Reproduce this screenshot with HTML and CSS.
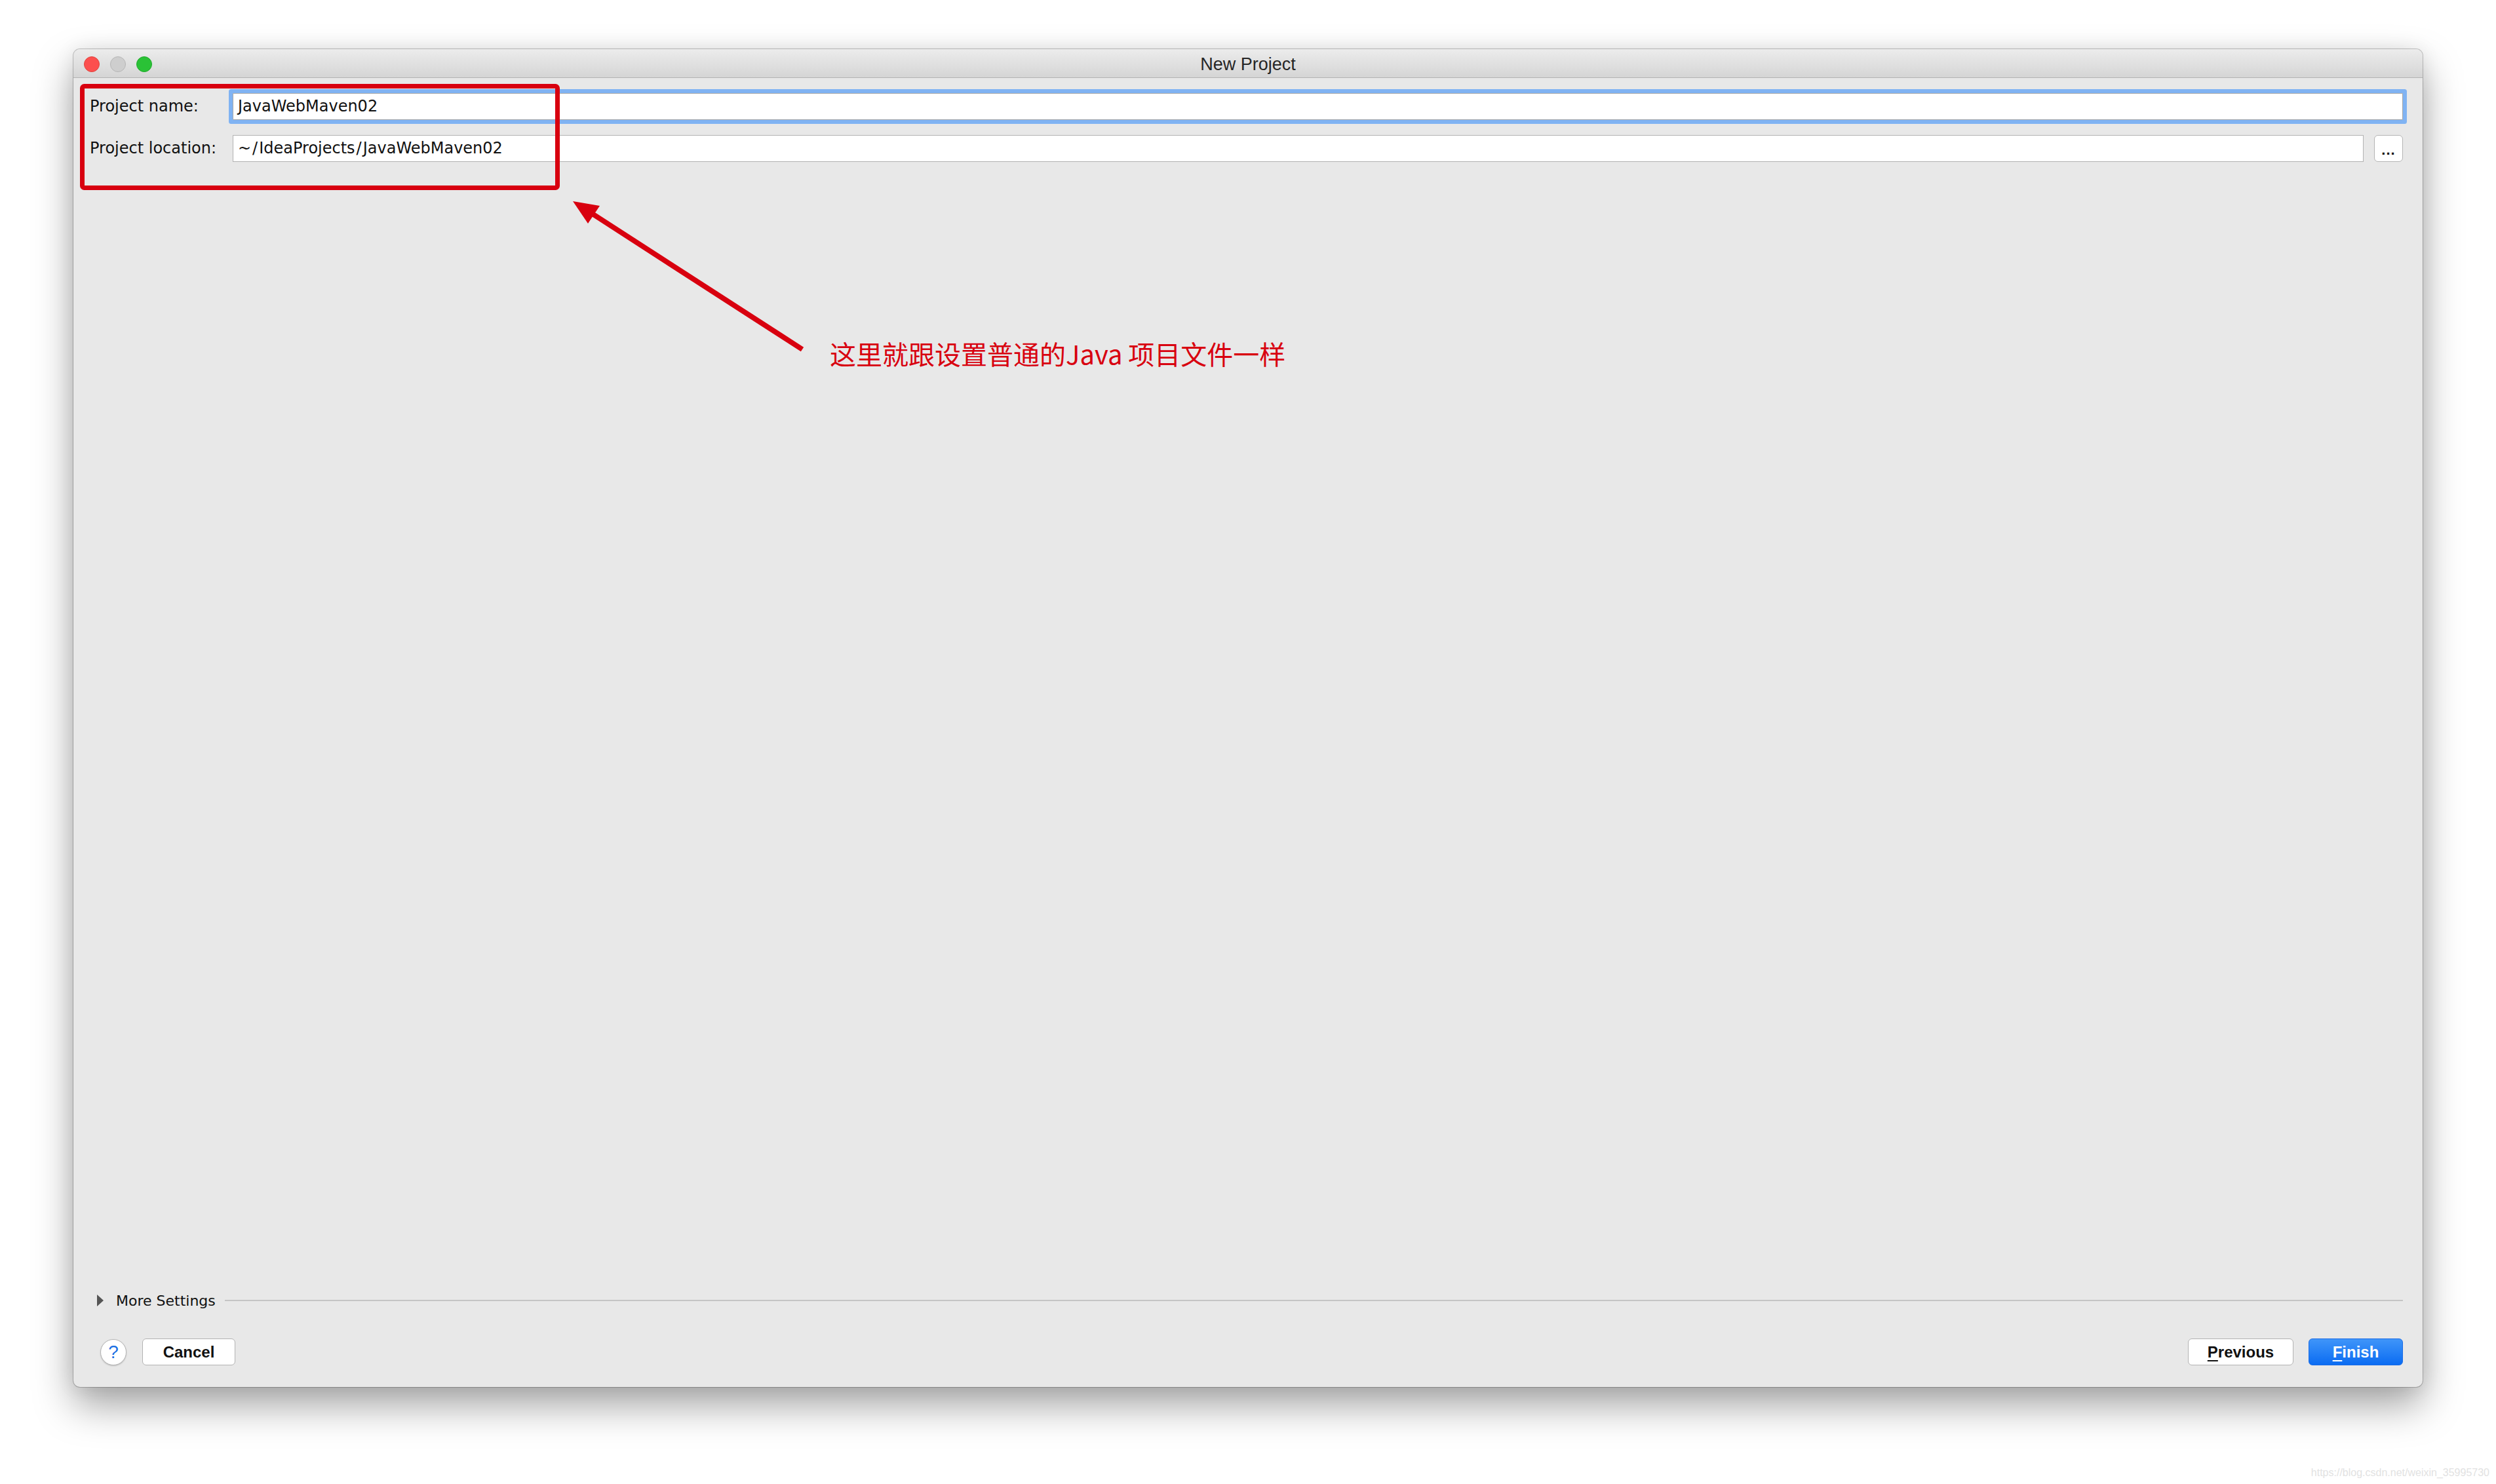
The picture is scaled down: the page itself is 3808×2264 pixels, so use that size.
FILE: index.html
```html
<!DOCTYPE html>
<html lang="zh-CN">
<head>
<meta charset="utf-8">
<title>New Project</title>
<link rel="stylesheet" href="styles.css">
</head>
<body>
<div class="stage">
  <div class="window">
    <div class="titlebar">
      <div class="lights">
        <span class="light red"></span>
        <span class="light gray"></span>
        <span class="light green"></span>
      </div>
      <div class="title">New Project</div>
      <div></div>
    </div>
    <div class="content">
      <div class="form">
        <div class="row">
          <label class="label">Project name:</label>
          <div class="field focus">JavaWebMaven02</div>
        </div>
        <div class="row">
          <label class="label">Project location:</label>
          <div class="field">~<span class="sl">/</span>IdeaProjects<span class="sl">/</span>JavaWebMaven02</div>
          <button class="browse">...</button>
        </div>
      </div>
      <div class="spacer"></div>
      <div class="more">
        <span class="tri"></span>
        <span class="more-text">More Settings</span>
        <span class="sep"></span>
      </div>
      <div class="buttons">
        <button class="help">?</button>
        <button class="btn cancel">Cancel</button>
        <div class="grow"></div>
        <button class="btn previous"><u>P</u>revious</button>
        <button class="btn primary finish"><u>F</u>inish</button>
      </div>
    </div>
  </div>
  <svg class="annot" width="3808" height="2264" viewBox="0 0 3808 2264">
    <rect x="125.5" y="131.5" width="725" height="155" rx="3" fill="none" stroke="#d8000f" stroke-width="7"/>
    <line x1="1224" y1="533" x2="902" y2="325" stroke="#d8000f" stroke-width="8"/>
    <polygon points="874,307 915,314 897,341" fill="#d8000f"/>
    <text class="note" x="1266" y="556">这里就跟设置普通的Java 项目文件一样</text>
  </svg>
  <div class="watermark">https://blog.csdn.net/weixin_35995730</div>
</div>
</body>
</html>
```

FILE: styles.css
```css
html, body {
  margin: 0;
  padding: 0;
  background: #ffffff;
}

.stage {
  position: relative;
  width: 3808px;
  height: 2264px;
  overflow: hidden;
  box-sizing: border-box;
  padding: 75px 112px 0 112px;
  background: #ffffff;
}

.window {
  height: 2041px;
  display: flex;
  flex-direction: column;
  background: #e8e8e8;
  border-radius: 10px;
  box-shadow: 0 0 0 1px rgba(0, 0, 0, 0.22), 0 28px 60px rgba(0, 0, 0, 0.36), 0 0 30px rgba(0, 0, 0, 0.08);
  overflow: hidden;
}

.titlebar {
  height: 44px;
  box-sizing: border-box;
  padding-top: 2px;
  display: grid;
  grid-template-columns: 1fr auto 1fr;
  align-items: center;
  background: linear-gradient(#ececec, #d5d5d5);
  border-bottom: 1px solid #b3b3b3;
}

.lights {
  display: flex;
  gap: 16px;
  padding-left: 16px;
}

.light {
  width: 24px;
  height: 24px;
  border-radius: 50%;
  box-sizing: border-box;
}

.light.red { background: #fc4f4e; border: 1px solid #e0443e; }
.light.gray { background: #cecece; border: 1px solid #b6b6b6; }
.light.green { background: #2ac236; border: 1px solid #1faa2b; }

.title {
  font-family: "Liberation Sans", Arial, sans-serif;
  font-size: 27px;
  color: #262626;
  padding-top: 1px;
}

.content {
  flex: 1;
  display: flex;
  flex-direction: column;
  padding: 23px 30px 33px 25px;
}

.form {
  display: flex;
  flex-direction: column;
  gap: 23px;
}

.row {
  display: flex;
  align-items: center;
  height: 41px;
}

.label {
  width: 218px;
  flex: none;
  font-family: "DejaVu Sans", sans-serif;
  font-size: 24px;
  color: #111111;
  line-height: 41px;
}

.field {
  flex: 1;
  height: 41px;
  box-sizing: border-box;
  background: #ffffff;
  border: 1px solid #b2b2b2;
  padding-left: 7px;
  font-family: "DejaVu Sans", sans-serif;
  font-size: 24px;
  line-height: 39px;
  color: #111111;
  white-space: nowrap;
}

.field .sl {
  margin: 0 2px;
}

.field.focus {
  border-color: #a8a8a8;
  border-radius: 1px;
  box-shadow: 0 0 0 6px #80b3f3;
}

.browse {
  flex: none;
  width: 44px;
  height: 41px;
  margin-left: 16px;
  padding: 0 0 6px 0;
  box-sizing: border-box;
  background: #ffffff;
  border: 1px solid #b5b5b5;
  border-radius: 6px;
  font-family: "Liberation Sans", Arial, sans-serif;
  font-weight: bold;
  font-size: 22px;
  letter-spacing: 1px;
  color: #111111;
  display: flex;
  align-items: flex-end;
  justify-content: center;
  line-height: 1;
}

.spacer {
  flex: 1;
}

.more {
  display: flex;
  align-items: center;
  height: 30px;
  margin-left: 11px;
}

.tri {
  width: 0;
  height: 0;
  border-left: 10px solid #555555;
  border-top: 9px solid transparent;
  border-bottom: 9px solid transparent;
}

.more-text {
  margin-left: 19px;
  font-family: "DejaVu Sans", sans-serif;
  font-size: 22px;
  color: #111111;
}

.sep {
  flex: 1;
  height: 2px;
  margin-left: 14px;
  background: #c4c4c4;
}

.buttons {
  display: flex;
  align-items: center;
  margin-top: 43px;
  height: 41px;
}

.help {
  width: 40px;
  height: 40px;
  margin-left: 16px;
  padding: 0;
  box-sizing: border-box;
  border-radius: 50%;
  border: 1px solid #b4b4b4;
  background: #ffffff;
  box-shadow: 0 1px 2px rgba(0, 0, 0, 0.18);
  font-family: "Liberation Sans", Arial, sans-serif;
  font-size: 28px;
  color: #1a6fe3;
  line-height: 1;
  display: flex;
  align-items: center;
  justify-content: center;
}

.btn {
  height: 41px;
  box-sizing: border-box;
  padding: 0;
  background: #ffffff;
  border: 1px solid #b3b3b3;
  border-radius: 6px;
  font-family: "Liberation Sans", Arial, sans-serif;
  font-weight: bold;
  font-size: 24px;
  color: #111111;
  line-height: 39px;
  text-align: center;
}

.btn u {
  text-decoration-thickness: 2px;
  text-underline-offset: 4px;
}

.cancel {
  width: 142px;
  margin-left: 24px;
}

.grow {
  flex: 1;
}

.previous {
  width: 161px;
}

.finish {
  width: 144px;
  margin-left: 23px;
}

.primary {
  background: linear-gradient(#3f95f9, #0b6cf2);
  border-color: #1a6ce6;
  color: #ffffff;
}

.annot {
  position: absolute;
  left: 0;
  top: 0;
  pointer-events: none;
}

.note {
  font-family: "Noto Sans CJK SC", sans-serif;
  font-size: 40px;
  font-weight: 400;
  fill: #d8000f;
}

.watermark {
  position: absolute;
  right: 10px;
  bottom: 8px;
  font-family: "Liberation Sans", Arial, sans-serif;
  font-size: 16px;
  color: #e2e2e2;
}
```
